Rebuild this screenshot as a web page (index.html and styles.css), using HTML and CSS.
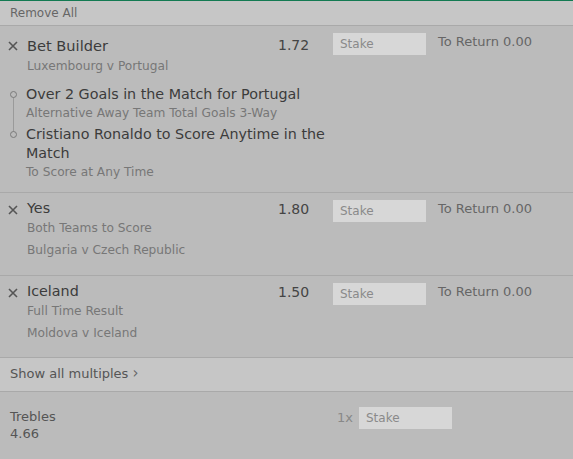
FILE: index.html
```html
<!DOCTYPE html>
<html lang="en">
<head>
    <meta charset="UTF-8">
    <title>Bet Slip</title>
    <link rel="stylesheet" href="styles.css">
</head>
<body>
    <div class="slip">
        <div class="slip-header">Remove All</div>

        <div class="bet builder">
            <svg class="remove" width="10" height="10" viewBox="0 0 10 10"><path d="M1 1L9 9M9 1L1 9"/></svg>
            <div class="bet-info">
                <div class="bet-name big">Bet Builder</div>
                <div class="bet-sub">Luxembourg v Portugal</div>
            </div>
            <div class="odds">1.72</div>
            <input type="text" class="stake" placeholder="Stake">
            <div class="to-return">To Return 0.00</div>
            <ul class="legs">
                <li class="leg">
                    <div class="leg-name">Over 2 Goals in the Match for Portugal</div>
                    <div class="bet-sub">Alternative Away Team Total Goals 3-Way</div>
                </li>
                <li class="leg">
                    <div class="leg-name">Cristiano Ronaldo to Score Anytime in the Match</div>
                    <div class="bet-sub">To Score at Any Time</div>
                </li>
            </ul>
        </div>

        <div class="bet">
            <svg class="remove" width="10" height="10" viewBox="0 0 10 10"><path d="M1 1L9 9M9 1L1 9"/></svg>
            <div class="bet-info">
                <div class="bet-name">Yes</div>
                <div class="bet-sub market">Both Teams to Score</div>
                <div class="bet-sub event">Bulgaria v Czech Republic</div>
            </div>
            <div class="odds">1.80</div>
            <input type="text" class="stake" placeholder="Stake">
            <div class="to-return">To Return 0.00</div>
        </div>

        <div class="bet last">
            <svg class="remove" width="10" height="10" viewBox="0 0 10 10"><path d="M1 1L9 9M9 1L1 9"/></svg>
            <div class="bet-info">
                <div class="bet-name">Iceland</div>
                <div class="bet-sub market">Full Time Result</div>
                <div class="bet-sub event">Moldova v Iceland</div>
            </div>
            <div class="odds">1.50</div>
            <input type="text" class="stake" placeholder="Stake">
            <div class="to-return">To Return 0.00</div>
        </div>

        <div class="multiples-toggle">Show all multiples <span class="chevron">&#x203A;</span></div>

        <div class="multiple">
            <div class="multiple-info">
                <div>Trebles</div>
                <div>4.66</div>
            </div>
            <span class="multiple-count">1x</span>
            <input type="text" class="stake" placeholder="Stake">
        </div>
    </div>
</body>
</html>
```

FILE: styles.css
```css
body {
    margin: 0;
    font-family: 'DejaVu Sans', sans-serif;
    background-color: #bbbbbb;
    color: #3c3c3c;
}
.slip {
    width: 573px;
    min-height: 459px;
    border-top: 1px solid #137a52;
    box-sizing: border-box;
}
.slip-header {
    height: 24px;
    line-height: 24px;
    padding-left: 10px;
    font-size: 12px;
    color: #666;
    background: #c6c6c6;
    border-bottom: 1px solid #a9a9a9;
}
.bet {
    display: grid;
    grid-template-columns: 19px 251px 55px 105px 1fr;
    align-items: start;
    padding: 7px 0 16px 8px;
    border-bottom: 1px solid #a9a9a9;
}
.bet.builder {
    padding-bottom: 11px;
}
.bet.last {
    padding-bottom: 15px;
}
.remove {
    margin-top: 5px;
    stroke: #555;
    stroke-width: 1.6;
    fill: none;
}
.builder .remove {
    margin-top: 8px;
}
.bet-name {
    font-size: 14.3px;
    line-height: 18px;
    margin-top: -1px;
    color: #3c3c3c;
}
.bet-name.big {
    font-size: 14.6px;
    margin-top: 4px;
}
.bet-sub {
    font-size: 12.2px;
    line-height: 18px;
    color: #777;
}
.bet-sub.market {
    margin-top: 2px;
}
.bet-sub.event {
    margin-top: 4px;
}
.builder .bet-info .bet-sub {
    margin-top: 2px;
}
.odds {
    font-size: 14px;
    line-height: 18px;
    margin-top: 0;
    color: #444;
}
.builder .odds {
    margin-top: 3px;
}
.stake {
    width: 93px;
    height: 22px;
    padding: 0 7px;
    border: none;
    background: #d7d7d7;
    font-family: 'DejaVu Sans', sans-serif;
    font-size: 12px;
    color: #333;
    box-sizing: border-box;
    outline: none;
}
.stake::placeholder {
    color: #8a8a8a;
}
.to-return {
    font-size: 13px;
    line-height: 18px;
    color: #666;
}
.legs {
    grid-column: 1 / -1;
    list-style: none;
    margin: 10px 0 0 0;
    padding: 0;
    width: 332px;
}
.leg {
    position: relative;
    padding-left: 18px;
}
.leg + .leg {
    margin-top: 3px;
}
.leg::before {
    content: "";
    position: absolute;
    left: 2px;
    top: 6px;
    width: 5px;
    height: 5px;
    border: 1px solid #7a7a7a;
    border-radius: 50%;
    background: #bbbbbb;
    z-index: 1;
}
.leg:first-child::after {
    content: "";
    position: absolute;
    left: 5px;
    top: 12px;
    bottom: -10px;
    width: 1px;
    background: #9a9a9a;
}
.leg-name {
    font-size: 14.3px;
    line-height: 19px;
    color: #3c3c3c;
}
.multiples-toggle {
    height: 33px;
    line-height: 30px;
    padding-left: 10px;
    font-size: 13px;
    color: #555;
    background: #c6c6c6;
    border-bottom: 1px solid #a9a9a9;
}
.chevron {
    font-size: 15px;
    color: #666;
}
.multiple {
    display: flex;
    align-items: flex-start;
    padding: 15px 0 0 10px;
}
.multiple-info {
    width: 327px;
    font-size: 13px;
    line-height: 17px;
    color: #555;
    margin-top: 1px;
}
.multiple-count {
    width: 22px;
    font-size: 13px;
    line-height: 22px;
    color: #888;
}
```
